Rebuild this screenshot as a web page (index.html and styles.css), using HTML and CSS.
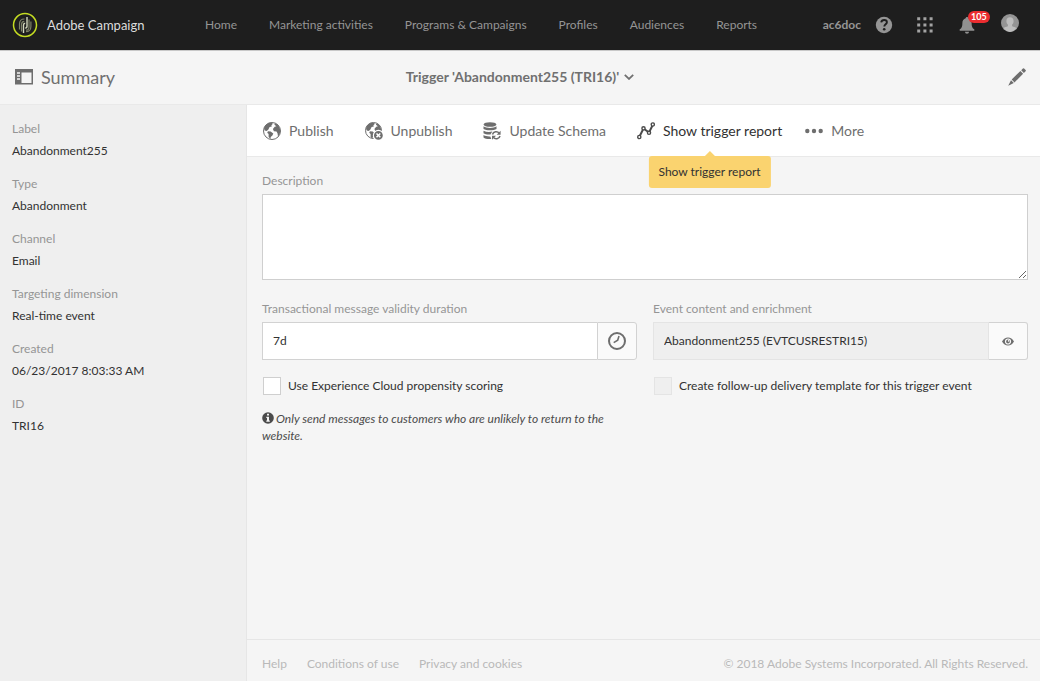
FILE: index.html
```html
<!DOCTYPE html>
<html lang="en">
<head>
<meta charset="utf-8">
<title>Adobe Campaign</title>
<link rel="stylesheet" href="styles.css">
</head>
<body>
<header class="topbar">
  <a class="brand" href="#">
    <svg width="26" height="26" viewBox="0 0 26 26" fill="none"><circle cx="13" cy="13" r="11.5" stroke="#c4dc22" stroke-width="1.5"/><path d="M7.500 17.500V12c0-3 2-5 5-5M9.500 19.500V12.500c0-2 1-3.200 2.800-3.200M17 7.500V15c0 2-1.200 3.200-3 3.200M18.900 9.500v5c0 3-2 5.200-4.900 5.200" stroke="#7d8268" stroke-width="1.200"/><path d="M11.500 21v-8c0-1.200.6-1.800 1.700-1.800M15 5v9.300c0 1.200-.6 1.800-1.800 1.800" stroke="#d2d7bd" stroke-width="1.400"/></svg>
    <span>Adobe Campaign</span>
  </a>
  <nav class="mainnav">
    <a href="#">Home</a><a href="#">Marketing activities</a><a href="#">Programs &amp; Campaigns</a><a href="#">Profiles</a><a href="#">Audiences</a><a href="#">Reports</a>
  </nav>
  <div class="tools">
    <span class="instance">ac6doc</span>
    <button class="iconbtn" aria-label="Help"><svg width="18" height="18" viewBox="0 0 18 18"><circle cx="9" cy="9" r="8.200" fill="#959595"/><path d="M6.200 6.400C6.500 4.800 7.600 4 9.100 4c1.700 0 2.800.9 2.800 2.300 0 2-2.600 2.100-2.600 4.200" fill="none" stroke="#1e1e1e" stroke-width="1.900"/><circle cx="9.200" cy="13.300" r="1.300" fill="#1e1e1e"/></svg></button>
    <button class="iconbtn" aria-label="Apps"><svg width="16" height="16" viewBox="0 0 16 16" fill="#a3a3a3"><path d="M.2.200h3v3h-3zM6.400.200h3v3h-3zM12.600.200h3v3h-3zM.2 6.400h3v3h-3zM6.400 6.400h3v3h-3zM12.600 6.400h3v3h-3zM.2 12.600h3v3h-3zM6.400 12.600h3v3h-3zM12.600 12.600h3v3h-3z"/></svg></button>
    <button class="iconbtn bell" aria-label="Notifications"><svg width="16" height="18" viewBox="0 0 16 18" fill="#919191"><path d="M8 1c.8 0 1.300.6 1.300 1.300 2.200.6 3.300 2.400 3.300 4.700 0 3.500.7 5.300 2.700 6.300v1.500H.7v-1.500c2-1 2.700-2.800 2.700-6.300 0-2.300 1.100-4.100 3.300-4.700C6.700 1.600 7.200 1 8 1zM6 15.800h4c0 1.200-.8 2-2 2s-2-.8-2-2z"/></svg><span class="badge">105</span></button>
    <button class="iconbtn avatar" aria-label="User"><svg width="18" height="18" viewBox="0 0 18 18"><circle cx="9" cy="9" r="9" fill="#949494"/><path d="M9 3.200c2.300 0 3.600 1.500 3.600 3.800 0 1.600-.6 2.900-1.500 3.600v1.600c1.500.5 3.400 1 4.300 1.900A9 9 0 0 1 9 18a9 9 0 0 1-6.400-3.900c.9-.9 2.800-1.400 4.300-1.900v-1.600C6 9.900 5.400 8.600 5.400 7c0-2.300 1.300-3.800 3.600-3.800z" fill="#bdbdbd"/></svg></button>
  </div>
</header>

<div class="titlebar">
  <div class="summary">
    <svg width="18" height="16" viewBox="0 0 18 16"><path d="M0 0h18v15.500H0zM6.500 3.500V14h10V3.500z" fill="#6e6e6e" fill-rule="evenodd"/><path d="M2 4h3M2 7h3M2 10h3" stroke="#f5f5f5" stroke-width="1.500"/></svg>
    <span>Summary</span>
  </div>
  <button class="trigger"><span>Trigger 'Abandonment255 (TRI16)'</span><svg width="10" height="6" viewBox="0 0 10 6"><path d="M.8.8 5 4.900 9.200.8" fill="none" stroke="#707070" stroke-width="1.800"/></svg></button>
  <button class="edit" aria-label="Edit"><svg width="18" height="18" viewBox="0 0 18 18" fill="#6e6e6e"><path d="m13.200 2.200 1.700-1.700q.6-.6 1.200 0l1.500 1.500q.6.600 0 1.200L15.900 4.900zM12.400 3l2.700 2.700-8.600 8.700-2.800-2.800zM3 12.200l2.800 2.800L.2 17.800z"/></svg></button>
</div>

<div class="layout">
  <aside class="sidebar">
    <dl>
      <dt>Label</dt><dd>Abandonment255</dd>
      <dt>Type</dt><dd>Abandonment</dd>
      <dt>Channel</dt><dd>Email</dd>
      <dt>Targeting dimension</dt><dd>Real-time event</dd>
      <dt>Created</dt><dd>06/23/2017 8:03:33 AM</dd>
      <dt>ID</dt><dd>TRI16</dd>
    </dl>
  </aside>
  <main class="main">
    <div class="toolbar">
      <button class="action"><svg width="18" height="18" viewBox="0 0 18 18"><circle cx="9" cy="9" r="8.500" fill="#fff" stroke="#6e6e6e"/><path d="M1 6C2 3 4.500.8 8 .6l2 1.200-1.600 1.500.4 1.300-2.200.5-1.200 2.300L3.700 9 1.600 8.400zM5 9.300l2.600.3 2.700 2-.9 2-1.700 1.500-.2 2-1.900-2.200V12L4.200 10.700zM12 1.300c3 1 5.200 4 5.200 7.600 0 2.500-1 4.500-2.200 5.600l-.5-3.200-1-1.700-2.600-.4-1-2.200 1.800-2.300 1.700-.5-2-1.400z" fill="#6e6e6e"/></svg><span>Publish</span></button>
      <button class="action"><svg width="18" height="18" viewBox="0 0 18 18"><circle cx="8.500" cy="8.500" r="8" fill="#fff" stroke="#6e6e6e"/><path d="M1 6C2 3 4.500.8 8 .6l2 1.200-1.600 1.500.4 1.300-2.200.5-1.200 2.300L3.700 9 1.600 8.400zM5 9.300l2.600.3 2.700 2-.9 2-1.700 1.500-.2 2-1.900-2.200V12L4.200 10.700zM11.500 1.300c3 1 4.700 4 4.700 7.600l-3.200.7-2.600-.4-1-2.200 1.800-2.300 1.700-.5-2-1.400z" fill="#6e6e6e"/><circle cx="13.400" cy="13.400" r="5" fill="#6e6e6e" stroke="#fff" stroke-width="1.200"/><path d="m11.500 11.500 3.800 3.800m0-3.800-3.800 3.800" stroke="#fff" stroke-width="1.500"/></svg><span>Unpublish</span></button>
      <button class="action"><svg width="18" height="18" viewBox="0 0 18 18"><ellipse cx="7" cy="2.500" rx="6.300" ry="2.300" fill="#6e6e6e"/><path d="M.5 4.300c3 2.100 10 2.100 13 0V7c-2.500 1.500-10 1.800-13 0zM.5 8.700C3 10 6 10.200 9.300 9.600L7.500 12.500c-3 .2-5.500-.2-7-1.200zM.5 13c2 1.200 4 1.500 6.800 1.400l1 2.500c-3.400.3-6.300-.2-7.800-1.500z" fill="#6e6e6e"/><path d="M9.500 12.500c.7-3 5-3.700 6.700-1.200M17 14c-.7 3-5 3.700-6.700 1.200" fill="none" stroke="#6e6e6e" stroke-width="1.500"/><path d="M17.600 8.800v4h-4zM9 17.700v-4h4z" fill="#6e6e6e"/></svg><span>Update Schema</span></button>
      <button class="action active"><svg width="18" height="18" viewBox="0 0 18 18"><path d="m2.500 14.500 4-8 5.500 4 4-8" fill="none" stroke="#4b4b4b" stroke-width="2"/><g fill="#fff" stroke="#4b4b4b" stroke-width="1.400"><circle cx="2.300" cy="15" r="1.600"/><circle cx="6.500" cy="6.300" r="1.600"/><circle cx="12" cy="10.800" r="1.600"/><circle cx="15.800" cy="2.500" r="1.600"/></g></svg><span>Show trigger report</span><span class="tooltip" role="tooltip">Show trigger report</span></button>
      <button class="action more"><svg width="18" height="6" viewBox="0 0 18 6" fill="#6e6e6e"><circle cx="2.300" cy="3" r="2.200"/><circle cx="9" cy="3" r="2.200"/><circle cx="15.700" cy="3" r="2.200"/></svg><span>More</span></button>
    </div>
    <form class="form">
      <div class="field">
        <label for="description">Description</label>
        <textarea id="description"></textarea>
      </div>
      <div class="columns">
        <div class="column">
          <label for="duration">Transactional message validity duration</label>
          <div class="group">
            <input class="text" id="duration" type="text" value="7d">
            <button type="button" class="addon" aria-label="Choose duration"><svg width="18" height="18" viewBox="0 0 18 18" fill="none" stroke="#6e6e6e"><circle cx="9" cy="9" r="8" stroke-width="2"/><path d="M11 4 9.700 8.200 5.700 10.600" stroke-width="1.600"/></svg></button>
          </div>
          <label class="check"><input type="checkbox"><span>Use Experience Cloud propensity scoring</span></label>
          <p class="hint"><svg width="12" height="12" viewBox="0 0 12 12"><circle cx="6" cy="6" r="5.800" fill="#4b4b4b"/><path d="M5 1.800h2v1.700H5zM4.300 4.700H7v3.800h.8v1.200H4.300V8.500H5V5.900h-.7z" fill="#f5f5f5"/></svg>Only send messages to customers who are unlikely to return to the website.</p>
        </div>
        <div class="column">
          <label for="event">Event content and enrichment</label>
          <div class="group">
            <input class="text readonly" id="event" type="text" value="Abandonment255 (EVTCUSRESTRI15)" readonly>
            <button type="button" class="addon" aria-label="View event"><svg width="12" height="9" viewBox="0 0 12 9"><path d="M0 4.500C1.500 2 3.500.5 6 .5s4.500 1.500 6 4C10.500 7 8.500 8.500 6 8.500S1.500 7 0 4.500z" fill="#6e6e6e"/><circle cx="6" cy="4.500" r="2.500" fill="#6e6e6e" stroke="#fafafa" stroke-width="1.200"/><circle cx="6.600" cy="3.900" r=".8" fill="#fafafa"/></svg></button>
          </div>
          <label class="check"><input type="checkbox" disabled><span>Create follow-up delivery template for this trigger event</span></label>
        </div>
      </div>
    </form>
    <footer class="footer">
      <nav><a href="#">Help</a><a href="#">Conditions of use</a><a href="#">Privacy and cookies</a></nav>
      <span>© 2018 Adobe Systems Incorporated. All Rights Reserved.</span>
    </footer>
  </main>
</div>
</body>
</html>
```
FILE: styles.css
```css
* { box-sizing: border-box; }
body {
  margin: 0;
  min-height: 100vh;
  display: flex;
  flex-direction: column;
  background: #f5f5f5;
  color: #323232;
  font: 12px/18px Lato, "Noto Sans", sans-serif;
}
a { color: inherit; text-decoration: none; }
button { font: inherit; color: inherit; background: none; border: 0; padding: 0; cursor: pointer; }
svg { display: block; flex: none; }

.topbar { display: flex; align-items: center; height: 50px; padding: 0 21px 0 12px; background: #1e1e1e; color: #959595; }
.brand { display: flex; align-items: center; gap: 9px; width: 193px; color: #dcdcdc; font-size: 13px; }
.mainnav { display: flex; gap: 32px; white-space: nowrap; }
.tools { display: flex; align-items: center; margin-left: auto; }
.instance { margin-right: 14px; font-weight: 700; }
.iconbtn { position: relative; margin-right: 24px; }
.iconbtn.bell { margin: 0 26px 0 2px; }
.iconbtn.avatar { margin: 0 0 4px; }
.badge { position: absolute; left: 9px; top: -5px; padding: 0 3px; border-radius: 6px; background: #ec2d30; color: #fff; font-size: 9px; line-height: 12px; font-weight: 700; }

.titlebar { display: grid; grid-template-columns: 1fr auto 1fr; align-items: center; height: 55px; padding: 0 14px 2px; border-top: 1px solid #c8c8c8; border-bottom: 1px solid #e9e9e9; color: #707070; }
.summary { display: flex; align-items: center; gap: 8px; padding-left: 1px; font-size: 18px; }
.trigger { display: flex; align-items: center; gap: 5px; font-size: 14px; font-weight: 700; }
.edit { justify-self: end; }

.layout { flex: 1; display: flex; }
.sidebar { width: 247px; flex: none; padding: 15px 12px; background: #efefef; border-right: 1px solid #e6e6e6; }
.sidebar dl { margin: 0; }
.sidebar dt { color: #959595; margin-bottom: 4px; }
.sidebar dd { margin: 0 0 15px; }

.main { flex: 1; min-width: 0; display: flex; flex-direction: column; }
.toolbar { display: flex; align-items: center; gap: 31px; height: 52px; padding: 0 16px; background: #fff; border-bottom: 1px solid #e9e9e9; color: #6e6e6e; font-size: 14px; white-space: nowrap; }
.action { position: relative; display: flex; align-items: center; gap: 8px; }
.action.active { color: #323232; }
.action.more { margin-left: -8px; }
.tooltip { position: absolute; left: 50%; top: 34px; transform: translateX(-50%); padding: 8px 10px; border-radius: 3px; background: #fad36f; color: #323232; font-size: 12px; line-height: 16px; }
.tooltip::before { content: ""; position: absolute; left: 50%; top: -5px; margin-left: -5px; border: solid transparent; border-width: 0 5px 5px; border-bottom-color: #fad36f; }

.form { flex: 1; padding: 15px 12px 15px 15px; }
.form label { display: block; color: #959595; }
.form textarea { display: block; width: 100%; height: 86px; margin: 4px 0 20px; padding: 8px 10px; border: 1px solid #cfcfcf; background: #fff; font: inherit; resize: vertical; }
.columns { display: grid; grid-template-columns: 1fr 1fr; gap: 16px; }
.group { display: flex; height: 38px; margin: 4px 0 17px; }
.text { flex: 1; min-width: 0; padding: 0 10px; border: 1px solid #d2d2d2; border-right: 0; border-radius: 0; background: #fff; color: #323232; font: inherit; }
.text.readonly { background: #efefef; border-color: #e4e4e4; }
.addon { display: grid; place-items: center; width: 40px; border: 1px solid #d2d2d2; border-radius: 0 3px 3px 0; background: #fafafa; }
.text.readonly + .addon { border-left-color: #e4e4e4; }
.form .check { display: flex; align-items: center; gap: 7px; color: #323232; }
.check input { appearance: none; width: 18px; height: 18px; margin: 0 0 0 1px; border: 1px solid #cfcfcf; background: #fff; }
.check input:disabled { background: #efefef; border-color: #e4e4e4; }
.hint { margin: 15px 0 0; font-style: italic; line-height: 17px; color: #4b4b4b; }
.hint svg { display: inline-block; margin-right: 2px; vertical-align: -1px; }

.footer { display: flex; align-items: center; justify-content: space-between; height: 42px; padding: 6px 12px 0 15px; border-top: 1px solid #e6e6e6; color: #b9b9b9; white-space: nowrap; }
.footer nav { display: flex; gap: 20px; }
```
